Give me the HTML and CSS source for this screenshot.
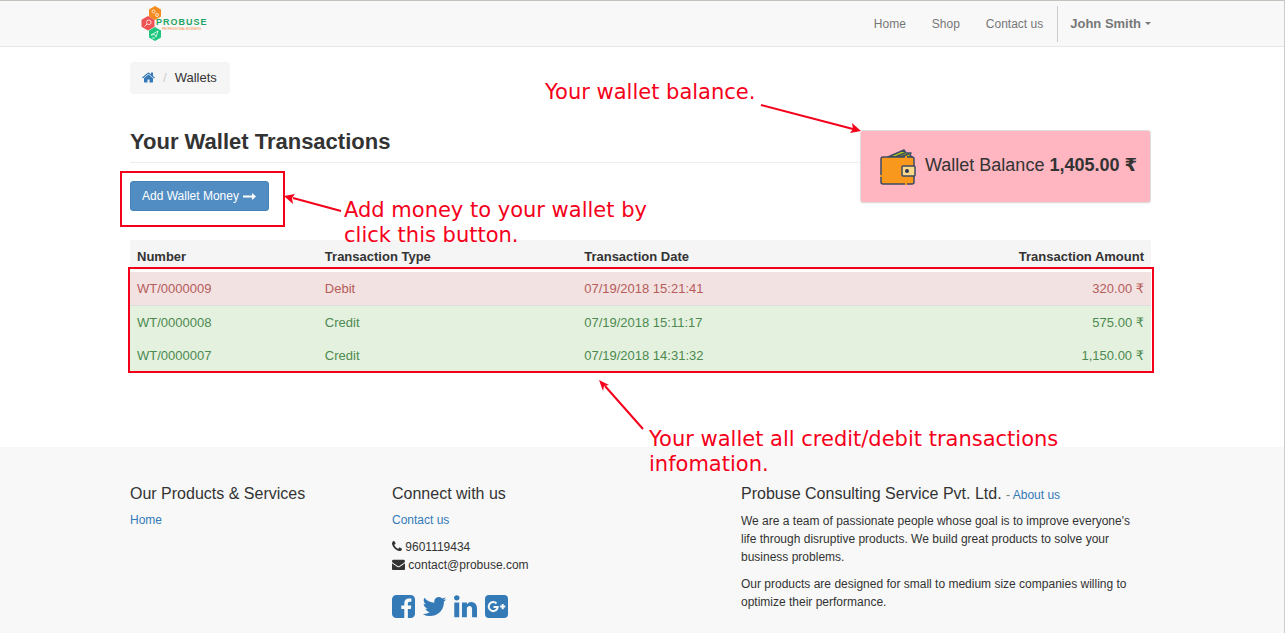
FILE: index.html
```html
<!DOCTYPE html>
<html lang="en">
<head>
<meta charset="utf-8">
<title>Wallets | Probuse</title>
<meta name="viewport" content="width=device-width, initial-scale=1">
<link rel="stylesheet" href="styles.css">
</head>
<body>
<div class="page">
  <header class="topbar">
    <div class="container topbar-inner">
      <a class="logo" href="#" aria-label="Probuse home">
        <svg class="logo-mark" viewBox="0 0 21 37" aria-hidden="true">
          <path fill="#f58a1f" d="M14 1l6 3.500v7L14 15l-6-3.500v-7z"/>
          <path fill="#ee5253" d="M7 11l6.500 3.700v7L7 25.500.5 21.700v-7z"/>
          <path fill="#1fc77e" d="M14 22l6 3.500v7L14 36l-6-3.500v-7z"/>
          <g fill="none" stroke="#fff" stroke-opacity=".75">
            <circle cx="12.500" cy="6.500" r="1.500"/><circle cx="16" cy="10" r="1.500"/>
            <circle cx="7.800" cy="17.300" r="2.300"/><path d="M6 19l-2.500 2.500"/>
            <path d="M10 30l7-4-2 6-1.500-2.500zM11 33h3"/>
          </g>
        </svg>
        <span class="logo-words"><span class="logo-name">PROBUSE</span><span class="logo-tag">PROFESSIONAL BUSINESS</span></span>
      </a>
      <nav class="nav" aria-label="Main">
        <a href="#">Home</a>
        <a href="#">Shop</a>
        <a href="#">Contact us</a>
        <button class="user" type="button">John Smith<span class="caret"></span></button>
      </nav>
    </div>
  </header>

  <main class="container content">
    <nav class="breadcrumb" aria-label="Breadcrumb">
      <a href="#" aria-label="Home"><svg class="icon" viewBox="64 64 1664 1664"><path d="M1472 992v480q0 26-19 45t-45 19h-384v-384h-256v384h-384q-26 0-45-19t-19-45v-480q0-1 .5-3t.5-3l575-474 575 474q1 2 1 6zm223-69l-62 74q-8 9-21 11h-3q-13 0-21-7l-692-577-692 577q-12 8-24 7-13-2-21-11l-62-74q-8-10-7-23.500t11-21.500l719-599q32-26 76-26t76 26l244 204v-195q0-14 9-23t23-9h192q14 0 23 9t9 23v408l219 182q10 8 11 21.500t-7 23.500z"/></svg></a>
      <span class="slash">/</span>
      <span>Wallets</span>
    </nav>

    <section class="summary">
      <div class="summary-main">
        <h1>Your Wallet Transactions</h1>
        <button class="add" type="button">Add Wallet Money
          <svg class="arrow-icon" viewBox="0 0 13 9" aria-hidden="true"><path d="M0 3.500h9V1l4 3.500-4 3.500V5.500H0z"/></svg>
        </button>
      </div>
      <div class="balance">
        <svg class="wallet" viewBox="0 0 36 36" aria-hidden="true">
          <g stroke="#3b4a63" stroke-width="1.500" stroke-linejoin="round">
            <path fill="#b5cc18" d="M8 8L24 1l2 3 5 0-1 2 2 2z"/>
            <path fill="none" d="M15 8l10-4M20 8l9-3"/>
            <rect x="1" y="8" width="33" height="27" rx="2" fill="#f8981d"/>
            <rect x="22" y="17" width="13" height="10" rx="1" fill="#fcd98a"/>
          </g>
          <path stroke="#f8981d" stroke-width="2" d="M1 26v2M25 8h2M25 35h2"/>
          <circle cx="27" cy="22" r="2" fill="#263550"/>
        </svg>
        <p>Wallet Balance <strong>1,405.00 ₹</strong></p>
      </div>
    </section>

    <table class="moves">
      <thead>
        <tr><th class="c-num">Number</th><th class="c-type">Transaction Type</th><th>Transaction Date</th><th class="amount">Transaction Amount</th></tr>
      </thead>
      <tbody>
        <tr class="debit"><td>WT/0000009</td><td>Debit</td><td>07/19/2018 15:21:41</td><td class="amount">320.00 ₹</td></tr>
        <tr class="credit"><td>WT/0000008</td><td>Credit</td><td>07/19/2018 15:11:17</td><td class="amount">575.00 ₹</td></tr>
        <tr class="credit"><td>WT/0000007</td><td>Credit</td><td>07/19/2018 14:31:32</td><td class="amount">1,150.00 ₹</td></tr>
      </tbody>
    </table>

    <div class="notes">
      <svg class="note-lines" viewBox="0 0 1040 460" aria-hidden="true">
        <g fill="none" stroke="#f5001a" stroke-width="2">
          <rect x="-9" y="125" width="163" height="54"/>
          <rect x="-1" y="221" width="1024" height="104"/>
          <path d="M631 58l92 24M211 164l-48-13M513 382l-38-43"/>
        </g>
        <g fill="#f5001a">
          <path d="M731 84l-11 2 3-4-1-6z"/>
          <path d="M154 149l11-2-3 4 1 6z"/>
          <path d="M469 333l10 5-5 1-1 5z"/>
        </g>
      </svg>
      <p class="note note-balance">Your wallet balance.</p>
      <p class="note note-add">Add money to your wallet by<br>click this button.</p>
      <p class="note note-list">Your wallet all credit/debit transactions<br>infomation.</p>
    </div>
  </main>

  <footer class="footer">
    <div class="container footer-grid">
      <section>
        <h2>Our Products &amp; Services</h2>
        <p><a href="#">Home</a></p>
      </section>
      <section>
        <h2>Connect with us</h2>
        <p><a href="#">Contact us</a></p>
        <p>
          <svg class="icon phone" viewBox="192 0 1408 1792" aria-hidden="true"><path d="M1600 1240q0 27-10 70.500t-21 68.500q-21 50-122 106-94 51-186 51-27 0-53-3.500t-57.500-12.500-47-14.500-55.500-20.500-49-18q-98-35-175-83-127-79-264-216t-216-264q-48-77-83-175-3-9-18-49t-20.500-55.500-14.500-47-12.500-57.500-3.500-53q0-92 51-186 56-101 106-122 25-11 68.500-21t70.500-10q14 0 21 3 18 6 53 76 11 19 30 54t35 63.500 31 53.500q3 4 17.500 25t21.500 35.500 7 28.500q0 20-28.500 50t-62 55-62 53-28.500 46q0 9 5 22.500t8.500 20.500 14 24 11.500 19q76 137 174 235t235 174q2 1 19 11.500t24 14 20.500 8.500 22.500 5q18 0 46-28.500t53-62 55-62 50-28.500q14 0 28.500 7t35.500 21.500 25 17.500q25 15 53.500 31t63.500 35 54 30q70 35 76 53 3 7 3 21z"/></svg>
          9601119434<br>
          <svg class="icon" viewBox="0 0 1792 1792" aria-hidden="true"><path d="M1792 710v794q0 66-47 113t-113 47h-1472q-66 0-113-47t-47-113v-794q44 49 101 87 362 246 497 345 57 42 92.500 65.500t94.500 48 110 24.500h2q51 0 110-24.500t94.500-48 92.500-65.500q170-123 498-345 57-39 100-87zm0-294q0 79-49 151t-122 123q-376 261-468 325-10 7-42.500 31t-54 38.500-52 32.500-57.500 27-50 9h-2q-23 0-50-9t-57.500-27-52-32.500-54-38.500-42.500-31q-91-64-262-182.500t-205-142.500q-62-42-117-115.500t-55-136.500q0-78 41.500-130t118.500-52h1472q65 0 112.500 47t47.500 113z"/></svg>
          contact@probuse.com
        </p>
        <div class="social">
          <a href="#" aria-label="Facebook"><svg viewBox="128 128 1536 1536"><path d="M1376 128q119 0 203.500 84.500t84.500 203.500v960q0 119-84.500 203.500t-203.500 84.500h-188v-595h199l30-232h-229v-148q0-56 23.500-84t91.500-28l122-1v-207q-63-9-178-9-136 0-217.500 80t-81.500 226v171h-200v232h200v595h-532q-119 0-203.500-84.500t-84.500-203.500v-960q0-119 84.500-203.500t203.500-84.500h960z"/></svg></a>
          <a href="#" aria-label="Twitter"><svg viewBox="128 128 1536 1536"><path d="M1684 408q-67 98-162 167 1 14 1 42 0 130-38 259.500t-115.500 248.500-184.500 210.500-258 146-323 54.500q-271 0-496-145 35 4 78 4 225 0 401-138-105-2-188-64.500t-114-159.500q33 5 61 5 43 0 85-11-112-23-185.500-111.500t-73.500-205.500v-4q68 38 146 41-66-44-105-115t-39-154q0-88 44-163 121 149 294.500 238.500t371.500 99.500q-8-38-8-74 0-134 94.500-228.500t228.500-94.500q140 0 236 102 109-21 205-78-37 115-142 178 93-10 186-50z"/></svg></a>
          <a href="#" aria-label="LinkedIn"><svg viewBox="128 128 1536 1536"><path d="M477 625v991h-330v-991h330zm21-306q1 73-50.500 122t-135.500 49h-2q-82 0-132-49t-50-122q0-74 51.500-122.500t134.500-48.500 133 48.500 51 122.500zm1166 729v568h-329v-530q0-105-40.500-164.500t-126.500-59.500q-63 0-105.500 34.500t-63.500 85.500q-11 30-11 81v553h-329q2-399 2-647t-1-296l-1-48h329v144h-2q20-32 41-56t56.500-52 87-43.500 114.500-15.500q171 0 275 113.500t104 332.500z"/></svg></a>
          <a href="#" aria-label="Google Plus"><svg viewBox="0 0 23 23"><rect width="23" height="23" rx="4"/><path fill="none" stroke="#f8f8f8" stroke-width="2" d="M11.500 8.500A4.500 4.500 0 1 0 12.700 12.200V12H8.500M17.700 9v5.200M15.100 11.600h5.200"/></svg></a>
        </div>
      </section>
      <section class="about">
        <h2>Probuse Consulting Service Pvt. Ltd. <small>- <a href="#">About us</a></small></h2>
        <p>We are a team of passionate people whose goal is to improve everyone's life through disruptive products. We build great products to solve your business problems.</p>
        <p>Our products are designed for small to medium size companies willing to optimize their performance.</p>
      </section>
    </div>
  </footer>
</div>
</body>
</html>
```
FILE: styles.css
```css
* { box-sizing: border-box; }

body {
  margin: 0;
  background: #fff;
  color: #333;
  font: 13px/18px "Liberation Sans", "DejaVu Sans", sans-serif;
}

a { color: #337ab7; text-decoration: none; }
p { margin: 0 0 9px; }
button { font: inherit; }

.page {
  display: flex;
  flex-direction: column;
  min-height: 100vh;
  margin-right: 1px;
  border-top: 1px solid #c5c1bd;
  border-right: 1px solid #ccc;
  overflow: hidden;
}

.container {
  width: 100%;
  max-width: 1024px;
  margin: 0 auto;
  padding-right: 3px;
}

.icon { width: 13px; height: 13px; fill: currentColor; vertical-align: -2px; }

/* Top bar */
.topbar { background: #f8f8f8; border-bottom: 1px solid #e7e7e7; }
.topbar-inner { display: flex; justify-content: space-between; align-items: center; height: 45px; }

.logo { display: flex; align-items: center; margin-left: 11px; }
.logo-mark { width: 21px; height: 37px; }
.logo-words { display: flex; flex-direction: column; margin-left: -6px; padding-top: 2px; }
.logo-name { color: #1fa463; font-size: 9px; font-weight: bold; line-height: 10px; letter-spacing: 1px; }
.logo-tag { color: #f58a3c; font-size: 3px; line-height: 5px; padding-left: 6px; }

.nav { display: flex; align-items: center; }
.nav a { color: #777; padding: 0 13px; font-size: 12px; }
.nav .user {
  display: flex;
  align-items: center;
  height: 36px;
  margin-left: 1px;
  padding: 0 0 0 12px;
  border: 0;
  border-left: 1px solid #ccc;
  background: none;
  color: #777;
  font-weight: bold;
}
.caret { margin-left: 4px; border: 3px solid transparent; border-top-color: #777; border-bottom: 0; }

/* Content */
.content { position: relative; flex: 1 0 400px; padding-top: 15px; }

.breadcrumb {
  display: inline-flex;
  gap: 8px;
  padding: 7px 13px 7px 12px;
  border-radius: 4px;
  background: #f5f5f5;
}
.slash { color: #ccc; }

.summary { display: flex; align-items: flex-start; margin-top: 36px; }
.summary-main { flex: 1; }
h1 {
  margin: 0 0 18px;
  padding-bottom: 9px;
  border-bottom: 1px solid #eee;
  font-size: 22px;
  line-height: 23px;
}
.add {
  display: flex;
  align-items: center;
  gap: 4px;
  height: 30px;
  padding: 0 12px 0 11px;
  border: 1px solid #4482b8;
  border-radius: 3px;
  background: #518dc3;
  color: #fff;
  font-size: 12px;
}
.arrow-icon { width: 13px; height: 9px; fill: currentColor; }

.balance {
  display: flex;
  align-items: center;
  gap: 9px;
  height: 73px;
  padding: 0 13px 0 19px;
  border: 1px solid #ddd;
  border-radius: 3px;
  background: #ffb6c1;
  box-shadow: 0 1px 1px #0000000d;
  font-size: 18px;
}
.balance p { margin: 0 0 4px; }
.wallet { width: 36px; height: 36px; }

.moves { width: 100%; margin-top: 29px; border-collapse: collapse; }
.moves th { padding: 8px 7px 4px; background: #f5f5f5; text-align: left; }
.moves thead { border-bottom: 2px solid #fff; }
.moves td { padding: 8px 7px 7px; }
.moves .c-num { width: 18.4%; }
.moves .c-type { width: 25.4%; }
.moves .amount { text-align: right; }
.debit { background: #f2e2e2; color: #b65c5a; border-bottom: 1px solid #ddd; }
.credit { background: #e4f1de; color: #4c8a50; }

/* Hand-placed callouts over the page */
.notes { position: absolute; top: 0; left: 0; width: 1021px; pointer-events: none; }
.note-lines { position: absolute; top: 0; left: 0; width: 1040px; height: 460px; overflow: visible; }
.note {
  position: absolute;
  margin: 0;
  color: #f5001a;
  font: 21px/25px "DejaVu Sans", sans-serif;
  white-space: nowrap;
}
.note-balance { left: 415px; top: 33px; }
.note-add { left: 214px; top: 151px; }
.note-list { left: 519px; top: 380px; }

/* Footer */
.footer { padding: 37px 0 14px; background: #f8f8f8; font-size: 12px; }
.footer-grid { display: grid; grid-template-columns: 262fr 349fr 410fr; }
.about { padding-right: 9px; }
h2 { margin: 0 0 7px; font-size: 16px; font-weight: normal; line-height: 20px; white-space: nowrap; }
small { font-size: 12px; color: #777; }
.phone { width: 10px; }
.social { display: flex; gap: 8px; margin-top: 21px; }
.social svg { display: block; width: 23px; height: 23px; overflow: visible; fill: #337ab7; }
```
